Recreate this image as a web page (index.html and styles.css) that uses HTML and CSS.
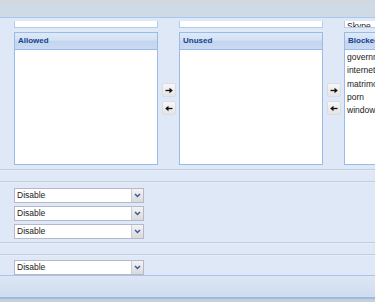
FILE: index.html
```html
<!DOCTYPE html>
<html>
<head>
  <title>Application Filter</title>
  <link rel="stylesheet" href="styles.css">
</head>
<body>
  <div class="top-strip"></div>
  <div class="toolbar"></div>

  <div class="lists">
    <div class="stub"></div>
    <div></div>
    <div class="stub"></div>
    <div></div>
    <div class="stub"><div class="stub-text">Skype</div></div>

    <div class="panel">
      <div class="panel-header">Allowed</div>
      <div class="panel-body"></div>
    </div>
    <div class="movers">
      <span class="mover"><svg width="8" height="7" viewBox="0 0 8 7"><path d="M0.5 3.5H5" stroke="#111" stroke-width="1.3"/><path d="M4.5 0.8L7.8 3.5L4.5 6.2Z" fill="#111"/></svg></span>
      <span class="mover"><svg width="8" height="7" viewBox="0 0 8 7"><path d="M3 3.5H7.5" stroke="#111" stroke-width="1.3"/><path d="M3.5 0.8L0.2 3.5L3.5 6.2Z" fill="#111"/></svg></span>
    </div>
    <div class="panel">
      <div class="panel-header">Unused</div>
      <div class="panel-body"></div>
    </div>
    <div class="movers">
      <span class="mover"><svg width="8" height="7" viewBox="0 0 8 7"><path d="M0.5 3.5H5" stroke="#111" stroke-width="1.3"/><path d="M4.5 0.8L7.8 3.5L4.5 6.2Z" fill="#111"/></svg></span>
      <span class="mover"><svg width="8" height="7" viewBox="0 0 8 7"><path d="M3 3.5H7.5" stroke="#111" stroke-width="1.3"/><path d="M3.5 0.8L0.2 3.5L3.5 6.2Z" fill="#111"/></svg></span>
    </div>
    <div class="panel">
      <div class="panel-header">Blocked</div>
      <div class="panel-body">
        <div class="item">government</div>
        <div class="item">internet_radio</div>
        <div class="item">matrimonial</div>
        <div class="item">porn</div>
        <div class="item">windows_update</div>
      </div>
    </div>
  </div>

  <div class="sep sep-first"></div>
  <div class="sep sep-gap"></div>

  <div class="combos">
    <div class="combo"><span class="combo-text">Disable</span><span class="combo-trigger"><svg width="7" height="5" viewBox="0 0 7 5"><path d="M1 1L3.5 3.5L6 1" stroke="#3a5a98" stroke-width="1.5" fill="none"/></svg></span></div>
    <div class="combo"><span class="combo-text">Disable</span><span class="combo-trigger"><svg width="7" height="5" viewBox="0 0 7 5"><path d="M1 1L3.5 3.5L6 1" stroke="#3a5a98" stroke-width="1.5" fill="none"/></svg></span></div>
    <div class="combo"><span class="combo-text">Disable</span><span class="combo-trigger"><svg width="7" height="5" viewBox="0 0 7 5"><path d="M1 1L3.5 3.5L6 1" stroke="#3a5a98" stroke-width="1.5" fill="none"/></svg></span></div>
  </div>

  <div class="sep sep-close"></div>
  <div class="sep sep-gap"></div>

  <div class="combos combos-single">
    <div class="combo"><span class="combo-text">Disable</span><span class="combo-trigger"><svg width="7" height="5" viewBox="0 0 7 5"><path d="M1 1L3.5 3.5L6 1" stroke="#3a5a98" stroke-width="1.5" fill="none"/></svg></span></div>
  </div>

  <div class="footer"></div>
  <div class="bottom-strip"></div>
</body>
</html>
```

FILE: styles.css
```css
body {
  margin: 0;
  width: 375px;
  height: 302px;
  overflow: hidden;
  background-color: #dfe8f6;
  font-family: "Liberation Sans", Arial, sans-serif;
  font-size: 8px;
  color: #222;
}

.top-strip {
  height: 3px;
  background-color: #d3d8de;
}

.toolbar {
  height: 14px;
  background-color: #cfdae7;
  border-bottom: 1px solid #a9c7ee;
}

.lists {
  display: grid;
  grid-template-columns: 144px 21px 144px 21px 144px;
  grid-template-rows: 7px 133px;
  row-gap: 4px;
  margin-top: 3px;
  padding-left: 14px;
}

.stub {
  background-color: #fff;
  border: 1px solid #b2cbee;
  border-top: none;
  overflow: hidden;
  box-sizing: border-box;
}

.stub-text {
  margin-top: -1px;
  padding-left: 2px;
  line-height: 13px;
  font-size: 8.5px;
}

.panel {
  display: flex;
  flex-direction: column;
  border: 1px solid #99bbe8;
  background-color: #fff;
  box-sizing: border-box;
}

.panel-header {
  height: 16px;
  line-height: 16px;
  padding-left: 3px;
  font-weight: bold;
  color: #15428b;
  border-bottom: 1px solid #99bbe8;
  background: linear-gradient(#dfeaf8 0, #d3e1f4 45%, #c3d6ef 50%, #c9daf1 100%);
}

.panel-body {
  flex: 1;
  padding-top: 1px;
  padding-left: 2px;
  overflow: hidden;
}

.item {
  height: 13.3px;
  line-height: 13.3px;
  font-size: 8.5px;
  white-space: nowrap;
}

.movers {
  display: flex;
  flex-direction: column;
  justify-content: center;
  align-items: center;
  gap: 4px;
  padding-top: 1px;
}

.mover {
  display: flex;
  justify-content: center;
  align-items: center;
  width: 14px;
  height: 14px;
  box-sizing: border-box;
  border: 1px solid #d9dde3;
  border-radius: 2px;
  background: linear-gradient(#f7f7f7, #e4e4e4);
}

.sep {
  height: 1px;
  border-top: 1px solid #c3cedc;
  background-color: #e6edf7;
}

.sep-first {
  margin-top: 4px;
}

.sep-gap {
  margin-top: 10px;
}

.sep-close {
  margin-top: 3px;
}

.combos {
  display: flex;
  flex-direction: column;
  gap: 3px;
  padding: 5px 0 0 14px;
}

.combos-single {
  padding-top: 4px;
}

.combo {
  display: flex;
  width: 130px;
  height: 15px;
  box-sizing: border-box;
  border: 1px solid #b5b8c8;
  background-color: #fff;
}

.combo-text {
  flex: 1;
  padding-left: 2px;
  line-height: 13px;
  font-size: 8.5px;
  color: #222;
}

.combo-trigger {
  display: flex;
  justify-content: center;
  align-items: center;
  width: 11px;
  border-left: 1px solid #c9ccd6;
  background: linear-gradient(#f4f4f4, #dadada);
}

.footer {
  height: 21px;
  border-top: 1px solid #a9c4e8;
  border-bottom: 2px solid #99bbe8;
  background: linear-gradient(#dce6f4, #cfdcee);
}

.bottom-strip {
  height: 3px;
  background-color: #c9cfd7;
}
```
